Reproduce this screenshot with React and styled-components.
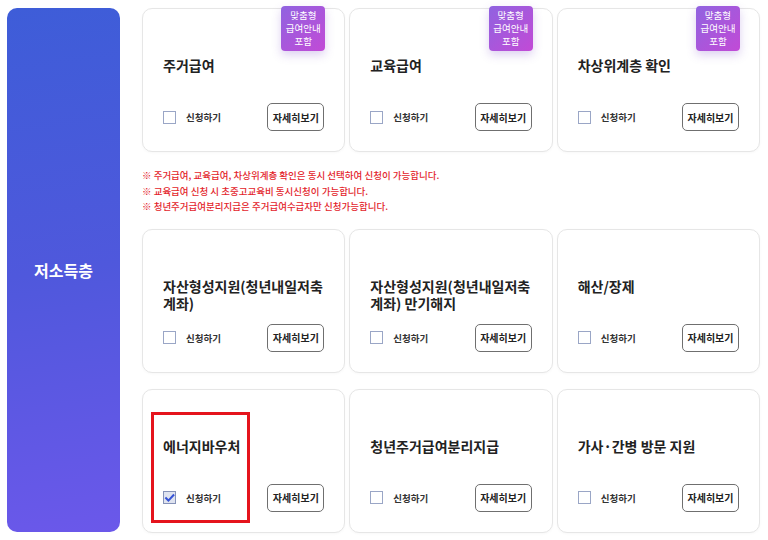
import styled, { createGlobalStyle } from "styled-components";

const benefitsTop = [
   { name: "주거급여", badge: true },
   { name: "교육급여", badge: true },
   { name: "차상위계층 확인", badge: true },
]

const benefitsBottom = [
   { name: "자산형성지원(청년내일저축계좌)" },
   { name: "자산형성지원(청년내일저축계좌) 만기해지" },
   { name: "해산/장제" },
   { name: "에너지바우처", checked: true, marked: true },
   { name: "청년주거급여분리지급" },
   { name: "가사·간병 방문 지원" },
]

const notes = [
   "※ 주거급여, 교육급여, 차상위계층 확인은 동시 선택하여 신청이 가능합니다.",
   "※ 교육급여 신청 시 초중고교육비 동시신청이 가능합니다.",
   "※ 청년주거급여분리지급은 주거급여수급자만 신청가능합니다.",
]

function BenefitCard({ name, badge, checked, marked }) {
   return (
      <Card>
         {badge && (
            <Badge>맞춤형<br />급여안내<br />포함</Badge>
         )}
         <Title>{name}</Title>
         <Bottom>
            <Apply>
               <Check $checked={checked}>
                  {checked && (
                     <svg width="12" height="10" viewBox="0 0 12 10">
                        <path d="M1.5 4.5 L4.8 7.8 L11 1.2" fill="none" stroke="#3553d6" strokeWidth="2.2" />
                     </svg>
                  )}
               </Check>
               신청하기
            </Apply>
            <DetailBtn>자세히보기</DetailBtn>
         </Bottom>
         {marked && <Highlight />}
      </Card>
   )
}

export default function App() {
   return (
      <>
         <GlobalStyle />
         <Page>
            <Side>저소득층</Side>
            <Main>
               <Grid>
                  {benefitsTop.map(item => <BenefitCard key={item.name} {...item} />)}
               </Grid>
               <Notes>
                  {notes.map(note => <li key={note}>{note}</li>)}
               </Notes>
               <Grid>
                  {benefitsBottom.map(item => <BenefitCard key={item.name} {...item} />)}
               </Grid>
            </Main>
         </Page>
      </>
   )
}

// STYLED COMPONENTS

const GlobalStyle = createGlobalStyle`
   * { box-sizing: border-box; }
   body {
      margin: 0;
      background: #fff;
      font-family: "Noto Sans CJK KR", "Noto Sans", sans-serif;
      color: #222;
   }
`

const Page = styled.div`
   display: flex;
   gap: 22px;
   padding: 8px 8px 8px 7px;
   width: 768px;
   height: 540px;
`

const Side = styled.div`
   width: 113px;
   height: 524px;
   flex-shrink: 0;
   border-radius: 10px;
   background: linear-gradient(172deg, #3e5dd8 0%, #4f58dc 50%, #6b58ea 100%);
   color: #fff;
   font-size: 16px;
   font-weight: 700;
   display: flex;
   align-items: center;
   justify-content: center;
`

const Main = styled.div`
   flex: 1;
   display: flex;
   flex-direction: column;
`

const Grid = styled.div`
   display: grid;
   grid-template-columns: repeat(3, 1fr);
   grid-auto-rows: 144px;
   column-gap: 4px;
   row-gap: 16px;
`

const Card = styled.div`
   position: relative;
   display: flex;
   flex-direction: column;
   padding: 0 20px 20px;
   border: 1px solid #e6e6e6;
   border-radius: 10px;
   background: #fff;
   box-shadow: 0 1px 3px rgba(0, 0, 0, 0.03);
`

const Badge = styled.div`
   position: absolute;
   top: -3px;
   right: 19px;
   width: 44px;
   height: 45px;
   border-radius: 4px;
   background: linear-gradient(135deg, #9063e0 0%, #c24ad6 100%);
   box-shadow: 0 4px 10px rgba(120, 70, 200, 0.25);
   color: #fff;
   font-size: 9.5px;
   line-height: 13px;
   text-align: center;
   padding-top: 3px;
`

const Title = styled.h3`
   margin: 48px 0 0;
   font-size: 14px;
   font-weight: 700;
   line-height: 17px;
   color: #222;
`

const Bottom = styled.div`
   margin-top: auto;
   display: flex;
   align-items: center;
   justify-content: space-between;
`

const Apply = styled.label`
   display: flex;
   align-items: center;
   gap: 10px;
   font-size: 9.5px;
   font-weight: 700;
   color: #333;
`

const Check = styled.span`
   width: 13px;
   height: 13px;
   border: 1.5px solid ${p => (p.$checked ? "#8592b8" : "#9aa6c6")};
   background: ${p => (p.$checked ? "#dfe3ef" : "#fff")};
   display: flex;
   align-items: center;
   justify-content: center;
`

const DetailBtn = styled.button`
   height: 28px;
   width: 57px;
   padding: 0;
   border: 1px solid #6f6f6f;
   border-radius: 5px;
   background: #fff;
   font-family: inherit;
   font-size: 10px;
   font-weight: 700;
   color: #222;
`

const Highlight = styled.div`
   position: absolute;
   left: 8px;
   top: 22px;
   width: 99px;
   height: 111px;
   border: 3px solid #e5141d;
   pointer-events: none;
`

const Notes = styled.ul`
   list-style: none;
   margin: 0;
   padding: 16px 0 14px;
   color: #e3252c;
   font-size: 9.5px;
   font-weight: 500;
   line-height: 15.5px;
`
